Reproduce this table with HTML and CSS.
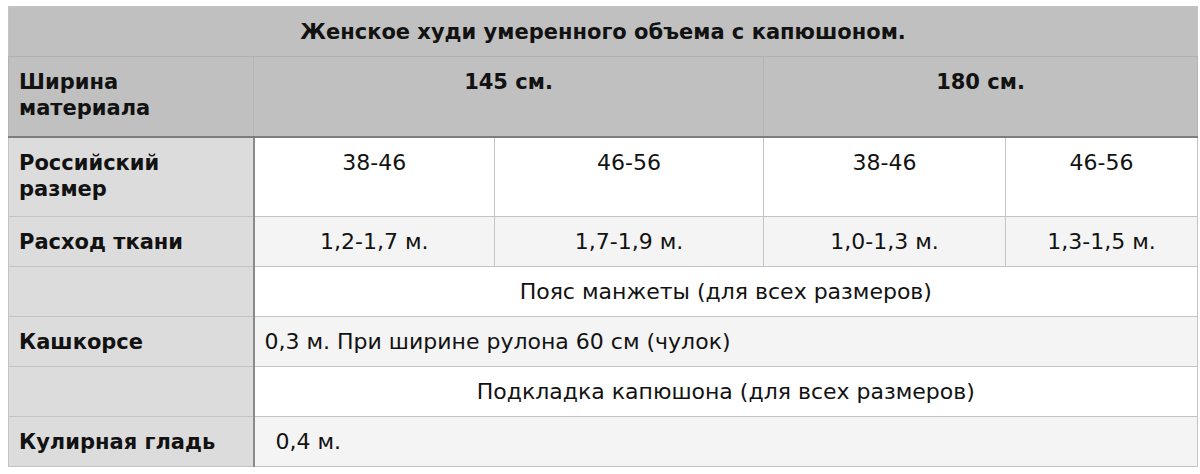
FILE: index.html
```
<!DOCTYPE html>
<html lang="ru">
<head>
<meta charset="utf-8">
<link rel="stylesheet" href="styles.css">
</head>
<body>
<div class="page">
<table class="sizes">
  <colgroup>
    <col class="c0">
    <col class="c1">
    <col class="c2">
    <col class="c3">
    <col class="c4">
  </colgroup>
  <tr class="r-title">
    <td colspan="5" class="title">Женское худи умеренного объема с капюшоном.</td>
  </tr>
  <tr class="r-head">
    <td class="lab">Ширина<br>материала</td>
    <td colspan="2" class="hd">145 см.</td>
    <td colspan="2" class="hd">180 см.</td>
  </tr>
  <tr class="r-tall body-w">
    <td class="lab side">Российский<br>размер</td>
    <td class="ctr">38-46</td>
    <td class="ctr">46-56</td>
    <td class="ctr">38-46</td>
    <td class="ctr">46-56</td>
  </tr>
  <tr class="r-std body-g">
    <td class="lab side">Расход ткани</td>
    <td class="ctr">1,2-1,7 м.</td>
    <td class="ctr">1,7-1,9 м.</td>
    <td class="ctr">1,0-1,3 м.</td>
    <td class="ctr">1,3-1,5 м.</td>
  </tr>
  <tr class="r-std body-w">
    <td class="lab side"></td>
    <td colspan="4" class="ctr">Пояс манжеты (для всех размеров)</td>
  </tr>
  <tr class="r-std body-g">
    <td class="lab side">Кашкорсе</td>
    <td colspan="4" class="lft">0,3 м. При ширине рулона 60 см (чулок)</td>
  </tr>
  <tr class="r-std body-w">
    <td class="lab side"></td>
    <td colspan="4" class="ctr">Подкладка капюшона (для всех размеров)</td>
  </tr>
  <tr class="r-std body-g">
    <td class="lab side">Кулирная гладь</td>
    <td colspan="4" class="lft ind">0,4 м.</td>
  </tr>
</table>
</div>
</body>
</html>
```
FILE: styles.css
```
html, body {
  margin: 0;
  padding: 0;
  background: #ffffff;
}
.page {
  padding: 6px 0 0 8px;
}
.sizes {
  border-collapse: collapse;
  table-layout: fixed;
  width: 1189px;
  font-family: "DejaVu Sans", "Liberation Sans", Arial, sans-serif;
  font-size: 22px;
  line-height: 26px;
  color: #121212;
  border: 1px solid #a9a9a9;
}
.c0 { width: 245px; }
.c1 { width: 241px; }
.c2 { width: 269px; }
.c3 { width: 242px; }
.c4 { width: 192px; }

.sizes td {
  border: 1px solid #c4c4c4;
  padding: 0 10px;
  vertical-align: middle;
  white-space: nowrap;
}
.r-title { height: 50px; }
.r-head { height: 80px; }
.r-tall { height: 80px; }
.r-std { height: 50px; }

.title, .hd, .lab {
  font-weight: bold;
  font-size: 21px;
}
.r-title td {
  background: #bfc0bf;
  text-align: center;
  border-bottom-color: #b0b0b0;
}
.r-head td {
  background: #bfc0bf;
  vertical-align: top;
  padding-top: 12px;
  border-color: #b4b4b4;
  border-bottom: 2px solid #7d7d7d;
}
.r-head .hd {
  text-align: center;
}
.lab {
  padding-left: 12px;
}
.side {
  background: #dcdcdc;
  border-right: 2px solid #8a8a8a !important;
}
.r-tall td {
  vertical-align: top;
  padding-top: 12px;
}
.body-w td { background: #ffffff; }
.body-g td { background: #f4f4f4; }
.body-w td.side, .body-g td.side { background: #dcdcdc; }
.ctr { text-align: center; }
.lft { text-align: left; }
.ind { padding-left: 21px !important; }
```
